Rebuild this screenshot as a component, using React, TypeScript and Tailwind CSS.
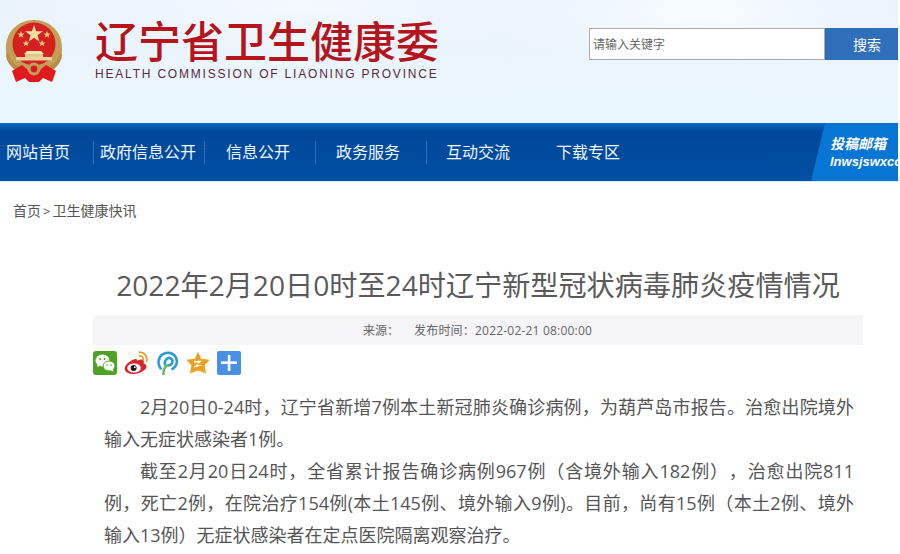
import React from "react";

const cjk = "font-['Open_Sans','Noto_Sans_CJK_SC',sans-serif]";

function Emblem() {
  return (
    <svg width="58" height="64" viewBox="0 0 58 64" className="shrink-0">
      <path d="M1 31 C0 13 13 1 29 1 C45 1 58 13 57 31 C57 40 53 47 48 51 L10 51 C5 47 1 40 1 31Z" fill="#c49d56" />
      <circle cx="29" cy="25" r="21.5" fill="#d4201f" />
      <path d="M29 6 l2.2 6.3 h6.7 l-5.4 4 2 6.4 -5.5 -3.9 -5.5 3.9 2 -6.4 -5.4 -4 h6.7z" fill="#f6dda0" />
      <path d="M16 12 l1 2.6 h2.6 l-2.1 1.6 .8 2.6 -2.3 -1.6 -2.3 1.6 .8 -2.6 -2.1 -1.6 h2.6z" fill="#f1cf7a" />
      <path d="M42 12 l1 2.6 h2.6 l-2.1 1.6 .8 2.6 -2.3 -1.6 -2.3 1.6 .8 -2.6 -2.1 -1.6 h2.6z" fill="#f1cf7a" />
      <path d="M21 21 l1 2.4 h2.4 l-1.9 1.5 .7 2.4 -2.2 -1.5 -2.2 1.5 .7 -2.4 -1.9 -1.5 h2.4z" fill="#f1cf7a" />
      <path d="M37 21 l1 2.4 h2.4 l-1.9 1.5 .7 2.4 -2.2 -1.5 -2.2 1.5 .7 -2.4 -1.9 -1.5 h2.4z" fill="#f1cf7a" />
      <path d="M22 32 h14 l3 3 H19z" fill="#f3e3b4" />
      <rect x="20" y="35" width="18" height="3" fill="#e2c98a" />
      <rect x="11" y="38" width="36" height="3.5" fill="#e6d29a" />
      <path d="M3 33 C4 44 14 50 29 51 C44 50 54 44 55 33 L57 36 C56 48 44 55 29 56 C14 55 2 48 1 36Z" fill="#b58e44" />
      <path d="M7 52 L17 46 L23 51 L35 51 L41 46 L51 52 L47 63 L38 59 L34 63 L24 63 L20 59 L11 63Z" fill="#e01a1c" />
      <circle cx="29" cy="50" r="6.5" fill="#c49d56" />
      <circle cx="29" cy="50" r="3.4" fill="#d4201f" />
    </svg>
  );
}

function ShareIcons() {
  return (
    <div className="mt-[6px] flex items-center gap-[7px]">
      <svg width="24" height="24" viewBox="0 0 24 24">
        <rect width="24" height="24" rx="3" fill="#4ea325" />
        <ellipse cx="9.5" cy="9.5" rx="7" ry="6" fill="#fff" />
        <path d="M5 13 l-1 3 3.5 -1.5z" fill="#fff" />
        <ellipse cx="16" cy="15" rx="6" ry="5" fill="#fff" stroke="#4ea325" strokeWidth="1" />
        <path d="M19.5 18 l1 2.5 -3.2 -1.2z" fill="#fff" />
        <circle cx="7.2" cy="8" r="1" fill="#4ea325" />
        <circle cx="11.6" cy="8" r="1" fill="#4ea325" />
        <circle cx="14" cy="14" r=".8" fill="#4ea325" />
        <circle cx="18" cy="14" r=".8" fill="#4ea325" />
      </svg>
      <svg width="24" height="24" viewBox="0 0 24 24">
        <path d="M9.5 8.5 C4 11 0 15 0.8 18.5 C1.6 22 6.5 23.6 11.5 22.8 C17 22 22.5 18.8 22.5 15.5 C22.5 13.5 20.5 12.8 19.6 12.5 C20.3 10.5 19.8 9 18.4 8.6 C16.6 8.1 14 9.2 13 9.8 C13.4 8 12 7.3 9.5 8.5Z" fill="#d8262b" />
        <ellipse cx="10" cy="17" rx="6.8" ry="4.6" fill="#fff" />
        <circle cx="9.6" cy="17" r="3" fill="#1d1a1a" />
        <circle cx="10.8" cy="16.2" r=".9" fill="#fff" />
        <path d="M15.5 1.2 C20 1 23.6 5 22.6 10.2" fill="none" stroke="#eda035" strokeWidth="2" strokeLinecap="round" />
        <path d="M15.8 5 C18 4.8 19.6 6.6 19.2 9" fill="none" stroke="#eda035" strokeWidth="1.8" strokeLinecap="round" />
      </svg>
      <svg width="24" height="24" viewBox="0 0 24 24">
        <path d="M5.6 17.5 C2.4 13.2 3 7 7.2 3.6 C11.4 .6 17.6 1.4 20.4 5.6 C23.2 10 21.8 15.6 17.4 18" fill="none" stroke="#2f9bd6" strokeWidth="2.6" strokeLinecap="round" />
        <path d="M10 13.6 C9 9 13 5.6 16 7.6 C18.8 9.6 17.4 14 13.6 14.4" fill="none" stroke="#2f9bd6" strokeWidth="2.6" strokeLinecap="round" />
        <path d="M12.6 14.6 C9.4 15.6 8.4 18.4 8.4 23" fill="none" stroke="#6bb66a" strokeWidth="2.6" strokeLinecap="round" />
      </svg>
      <svg width="24" height="24" viewBox="0 0 24 24">
        <path d="M12 0.8 L15.2 7.8 L23.6 8.8 L18.6 14.4 L20 22.6 L12 19.4 L4 22.6 L5.4 14.4 L0.4 8.8 L8.8 7.8Z" fill="#eda021" />
        <path d="M8 9.8 H16 L11 14.2 H16.8 L7.4 16.4 L12.6 11.6 H8Z" fill="#fff" />
      </svg>
      <svg width="24" height="24" viewBox="0 0 24 24">
        <rect width="24" height="24" rx="2" fill="#4a90e2" />
        <rect x="10.8" y="4" width="2.6" height="16" fill="#fff" />
        <rect x="4" y="10.4" width="16" height="2.6" fill="#fff" />
      </svg>
    </div>
  );
}

const navItems = [
  { t: "政府信息公开", c: "pl-[6px]" },
  { t: "信息公开", c: "pl-[21px]" },
  { t: "政务服务", c: "pl-[20px]" },
  { t: "互动交流", c: "pl-[19px]" },
];

export default function App() {
  return (
    <div className={`h-[554px] w-[900px] overflow-hidden bg-white ${cjk}`}>
      <div className="w-[898px]">
        <header className="flex h-[123px] items-start bg-[radial-gradient(ellipse_220px_60px_at_700px_12px,#f6fbfe_0%,transparent_100%),radial-gradient(ellipse_300px_50px_at_300px_5px,#f3f9fd_0%,transparent_100%),linear-gradient(180deg,#e9f3fa_0%,#e9f4fc_45%,#ecf8ff_100%)] pl-[5px]">
          <div className="mt-[19px]">
            <Emblem />
          </div>
          <div className="ml-[32px] mt-[18px] flex flex-col">
            <div className="text-[43px] leading-[48px] font-medium text-[#b5141c] whitespace-nowrap">辽宁省卫生健康委</div>
            <div className="text-[12px] leading-[16px] tracking-[1.8px] text-[#5c2a36] font-['Liberation_Sans',sans-serif] whitespace-nowrap">
              HEALTH COMMISSION OF LIAONING PROVINCE
            </div>
          </div>
          <div className="ml-auto mt-[28px] flex h-[32px]">
            <div className="flex h-full w-[236px] items-center border border-[#aaaaaa] bg-white pl-[3px] pt-[2px] text-[12px] text-[#666666]">
              请输入关键字
            </div>
            <div className="flex h-full w-[73px] items-center justify-center bg-[#2f6fb9] pl-[11px] text-[14px] text-white">搜索</div>
          </div>
        </header>

        <nav className="flex h-[59px] items-center border-b border-[#d6eeff] bg-[linear-gradient(180deg,#0a6ac8_0%,#00479a_14%,#004fa3_100%)] text-[16px] text-[#f0f8ff]">
          <div className="w-[93px] pl-[6px]">网站首页</div>
          {navItems.map((n) => (
            <div key={n.t} className={`flex h-[23px] w-[111px] items-center border-l border-[#2d72c0] ${n.c}`}>
              {n.t}
            </div>
          ))}
          <div className="w-[111px] pl-[19px]">下载专区</div>
          <div className="ml-auto flex h-[58px] w-[87px] flex-col justify-center overflow-hidden bg-[#0675d4] pl-[19px] font-bold italic text-white [clip-path:polygon(14px_0,100%_0,100%_100%,0_100%)]">
            <div className="text-[14px] leading-[19px]">投稿邮箱</div>
            <div className="whitespace-nowrap font-['Liberation_Sans',sans-serif] text-[13px] leading-[18px]">lnwsjswxcc@163.com</div>
          </div>
        </nav>

        <div className="pl-[13px] pt-[19px] text-[14px] leading-[20px] text-[#555555]">
          首页<span className="mx-[2px] text-[13px]">&gt;</span>卫生健康快讯
        </div>

        <div className="ml-[93px] w-[770px]">
          <h1 className="mt-[44px] text-center text-[28.15px] leading-[40px] font-normal whitespace-nowrap text-[#5a5a5a]">
            2022年2月20日0时至24时辽宁新型冠状病毒肺炎疫情情况
          </h1>
          <div className="mt-[10px] flex h-[30px] items-center gap-[15px] bg-[#f5f4f6] pl-[270px] pt-[2px] text-[12px] text-[#666666]">
            <span>来源：</span>
            <span className="tracking-[.2px]">发布时间：2022-02-21 08:00:00</span>
          </div>
          <ShareIcons />
        </div>

        <article className="ml-[104px] mt-[16px] w-[750px] text-justify text-[18px] leading-[32px] text-[#555555] [text-spacing-trim:space-all]">
          <p className="indent-[36px]">2月20日0-24时，辽宁省新增7例本土新冠肺炎确诊病例，为葫芦岛市报告。治愈出院境外输入无症状感染者1例。</p>
          <p className="indent-[36px]">截至2月20日24时，全省累计报告确诊病例967例（含境外输入182例），治愈出院811例，死亡2例，在院治疗154例(本土145例、境外输入9例)。目前，尚有15例（本土2例、境外输入13例）无症状感染者在定点医院隔离观察治疗。</p>
        </article>
      </div>
    </div>
  );
}
